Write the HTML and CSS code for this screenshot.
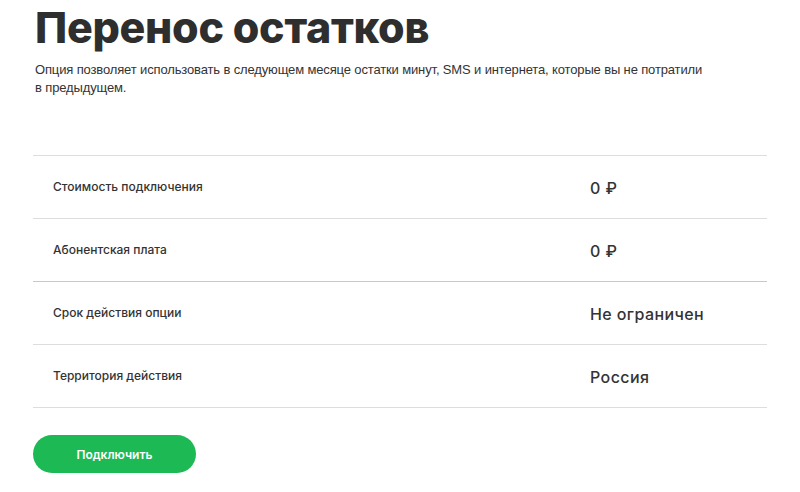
FILE: index.html
```html
<!DOCTYPE html>
<html lang="ru">
<head>
  <meta charset="UTF-8" />
  <meta name="viewport" content="width=device-width, initial-scale=1.0"/>
  <title>Перенос остатков</title>
  <link rel="stylesheet" href="styles.css">
</head>
<body>

  <div class="container">
    <h1>Перенос остатков</h1>
    <p class="lead">Опция позволяет использовать в следующем месяце остатки минут, SMS и интернета, которые вы не потратили в предыдущем.</p>

    <div class="params">
      <div class="row">
        <div class="label">Стоимость подключения</div>
        <div class="value">0 ₽</div>
      </div>
      <div class="row">
        <div class="label">Абонентская плата</div>
        <div class="value">0 ₽</div>
      </div>
      <div class="row">
        <div class="label">Срок действия опции</div>
        <div class="value">Не ограничен</div>
      </div>
      <div class="row">
        <div class="label">Территория действия</div>
        <div class="value">Россия</div>
      </div>
    </div>

    <button class="connect">Подключить</button>
  </div>

</body>
</html>
```

FILE: styles.css
```css
body {
  font-family: Inter, "Liberation Sans", sans-serif;
  background: #fff;
  color: #333;
  margin: 0;
  padding: 0;
}
.container {
  width: 734px;
  margin: 0 0 0 33px;
}
h1 {
  font-size: 43px;
  font-weight: 800;
  color: #2e2e2e;
  margin: 0;
  padding: 2px 0 0 2px;
  line-height: 50px;
  letter-spacing: -0.3px;
}
.lead {
  font-family: "Liberation Sans", sans-serif;
  font-size: 13px;
  line-height: 18px;
  letter-spacing: -0.14px;
  margin: 9px 0 0 2px;
  width: 672px;
  color: #333;
}
.params {
  margin-top: 58px;
  border-top: 1px solid #ddd;
}
.row {
  display: flex;
  align-items: center;
  height: 62px;
  border-bottom: 1px solid #ddd;
}
.row:nth-child(2) {
  border-bottom-color: #c8c8c8;
}
.label {
  width: 537px;
  padding-left: 20px;
  font-size: 12px;
  font-weight: 500;
  color: #333;
  margin-top: -2px;
}
.value {
  font-size: 16px;
  font-weight: 500;
  color: #333;
  letter-spacing: 0.4px;
  margin-top: 1px;
}
.connect {
  margin-top: 27px;
  width: 163px;
  height: 38px;
  border: none;
  border-radius: 19px;
  background-color: #1db954;
  color: #fff;
  font-family: Inter, "Liberation Sans", sans-serif;
  font-size: 12px;
  font-weight: 600;
  cursor: pointer;
}
```
